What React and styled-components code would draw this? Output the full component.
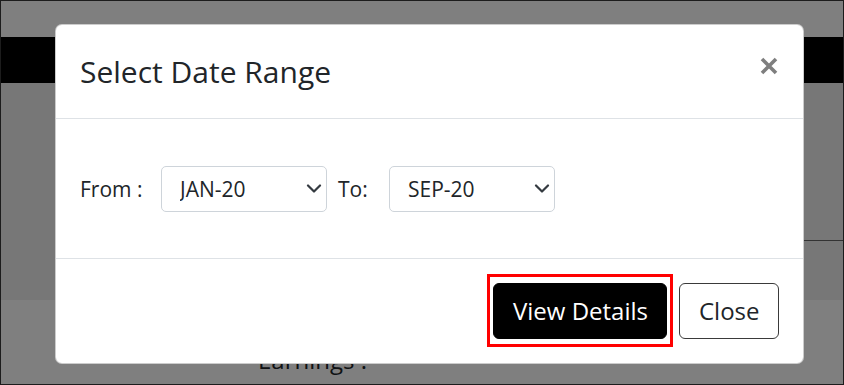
import React from 'react';
import styled, {createGlobalStyle} from 'styled-components';

const GlobalStyle = createGlobalStyle`
  html, body {
    margin: 0;
    padding: 0;
    background: #fff;
  }
  body {
    font-family: 'Open Sans', 'Liberation Sans', sans-serif;
    color: #212529;
  }
  * {
    box-sizing: border-box;
  }
`;

const Page = styled.div`
  position: relative;
  width: 844px;
  height: 385px;
  overflow: hidden;
  border: 1px solid #1c1c1c;
  background: #fff;
`;

const Navbar = styled.div`
  margin-top: 36px;
  height: 46px;
  background: #000;
`;

const Section = styled.div`
  height: 217px;
  background: #eeeeee;
`;

const SectionRow = styled.div`
  margin-left: 420px;
  height: 158px;
  border-bottom: 1px solid #666;
`;

const Earnings = styled.div`
  padding: 42px 0 0 257px;
  font-size: 24px;
  line-height: 36px;
  color: #212529;
`;

const Backdrop = styled.div`
  position: absolute;
  inset: 0;
  background: rgba(0, 0, 0, 0.5);
`;

const Modal = styled.div`
  position: absolute;
  top: 23px;
  left: 54px;
  width: 749px;
  display: flex;
  flex-direction: column;
  background: #fff;
  border: 1px solid rgba(0, 0, 0, 0.2);
  border-radius: 7px;
`;

const Header = styled.div`
  display: flex;
  align-items: flex-start;
  justify-content: space-between;
  padding: 24px;
  border-bottom: 1px solid #dee2e6;
`;

const Title = styled.h5`
  margin: 0;
  font-size: 30px;
  line-height: 45px;
  font-weight: 500;
  color: #212529;
`;

const CloseX = styled.button`
  display: flex;
  align-items: center;
  justify-content: center;
  width: 24px;
  height: 24px;
  margin: 5px -2px 0 auto;
  padding: 0;
  border: 0;
  background: transparent;
  opacity: 0.5;
  cursor: pointer;
`;

const Body = styled.div`
  padding: 24px;
`;

const Row = styled.div`
  display: flex;
  align-items: center;
  min-height: 91px;
`;

const FieldLabel = styled.label`
  width: ${({$width}) => $width}px;
  margin-left: ${({$offset}) => $offset || 0}px;
  font-size: 21px;
  line-height: 32px;
  color: #212529;
`;

const SelectWrap = styled.div`
  position: relative;
  width: 166px;
  height: 46px;
`;

const Select = styled.select`
  appearance: none;
  width: 100%;
  height: 100%;
  padding: 0 36px 0 18px;
  font-family: 'Open Sans', 'Liberation Sans', sans-serif;
  font-size: 21px;
  color: #212529;
  background: #fff;
  border: 1px solid #ced4da;
  border-radius: 5px;
  outline: none;
`;

const Chevron = styled.svg`
  position: absolute;
  right: 5px;
  top: 50%;
  transform: translateY(-50%);
  pointer-events: none;
`;

const Footer = styled.div`
  display: flex;
  align-items: center;
  justify-content: flex-end;
  padding: 18px;
  border-top: 1px solid #dee2e6;
`;

const Highlight = styled.span`
  position: relative;
  display: inline-flex;
  margin: 6px;
  &::after {
    content: '';
    position: absolute;
    top: -9px;
    left: -6px;
    right: -6px;
    bottom: -8px;
    border: 3px solid #ff0000;
    pointer-events: none;
  }
`;

const Button = styled.button`
  margin: ${({$bare}) => ($bare ? 0 : '6px')};
  padding: 9px 18.5px;
  font-family: 'Open Sans', 'Liberation Sans', sans-serif;
  font-size: 24px;
  line-height: 36px;
  border-radius: 6px;
  cursor: pointer;
  color: ${({$dark}) => ($dark ? '#fff' : '#212529')};
  background: ${({$dark}) => ($dark ? '#000' : '#fff')};
  border: 1px solid ${({$dark}) => ($dark ? '#000' : '#3a3a3a')};
`;

const MONTHS = ['JAN-20', 'FEB-20', 'MAR-20', 'APR-20', 'MAY-20', 'JUN-20', 'JUL-20', 'AUG-20', 'SEP-20'];

const MonthSelect = ({value}) => (
  <SelectWrap>
    <Select defaultValue={value}>
      {MONTHS.map((m) => (
        <option key={m} value={m}>
          {m}
        </option>
      ))}
    </Select>
    <Chevron width="16" height="10" viewBox="0 0 16 10">
      <path
        d="M2 1.5L8 7.5L14 1.5"
        fill="none"
        stroke="#343a40"
        strokeWidth="2.2"
        strokeLinecap="round"
        strokeLinejoin="round"
      />
    </Chevron>
  </SelectWrap>
);

const App = () => (
  <>
    <GlobalStyle />
    <Page>
      <Navbar />
      <Section>
        <SectionRow />
      </Section>
      <Earnings>Earnings :</Earnings>
      <Backdrop />
      <Modal>
        <Header>
          <Title>Select Date Range</Title>
          <CloseX aria-label="Close">
            <svg width="18" height="18" viewBox="0 0 18 18">
              <path d="M2 2L16 16M16 2L2 16" stroke="#000" strokeWidth="3.6" strokeLinecap="butt" />
            </svg>
          </CloseX>
        </Header>
        <Body>
          <Row>
            <FieldLabel $width={81}>From :</FieldLabel>
            <MonthSelect value="JAN-20" />
            <FieldLabel $width={51} $offset={11}>
              To:
            </FieldLabel>
            <MonthSelect value="SEP-20" />
          </Row>
        </Body>
        <Footer>
          <Highlight>
            <Button $dark $bare>
              View Details
            </Button>
          </Highlight>
          <Button>Close</Button>
        </Footer>
      </Modal>
    </Page>
  </>
);

export default App;
